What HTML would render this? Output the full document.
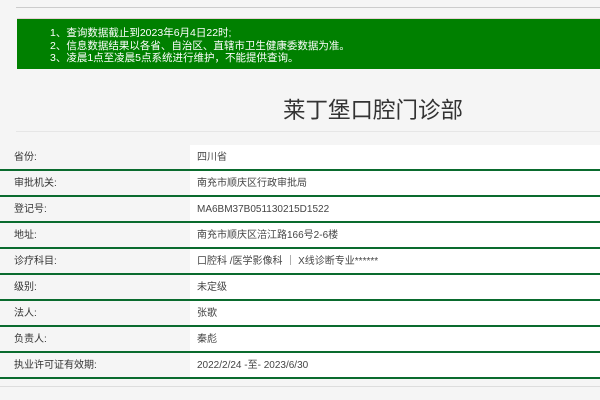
<!DOCTYPE html>
<html><head><meta charset="utf-8"><style>
*{margin:0;padding:0;box-sizing:border-box}
body{width:600px;height:400px;background:#f5f5f5;font-family:"Liberation Sans","Noto Sans CJK SC",sans-serif;position:relative;overflow:hidden;color:#333}
.l1{position:absolute;left:16px;top:7px;width:584px;height:1px;background:#ccc}
.notice{position:absolute;left:17px;top:18px;width:583px;height:51px;background:#008000;border-top:1px solid #e8d0d8;color:#fff;font-size:10.5px;line-height:12.5px;padding:8px 0 0 33px}
.title{position:absolute;left:283px;top:93px;font-size:22.5px;color:#333}
.l2{position:absolute;left:16px;top:131px;width:584px;height:1px;background:#e6e6e6}
.tbl{position:absolute;left:0;top:145px;width:600px}
.row{height:26px;border-bottom:2px solid #0a6b2e;display:flex;font-size:10px;color:#333}
.row .k{width:190px;background:#f5f5f5;padding-left:14px;line-height:25px}
.row .v{flex:1;background:#fff;padding-left:7px;line-height:25px;color:#444}
.l3{position:absolute;left:0;top:386px;width:600px;height:1px;background:#ddd}
</style></head><body>
<div class="l1"></div>
<div class="notice">1、查询数据截止到2023年6月4日22时;<br>2、信息数据结果以各省、自治区、直辖市卫生健康委数据为准。<br>3、凌晨1点至凌晨5点系统进行维护，不能提供查询。</div>
<div class="title">莱丁堡口腔门诊部</div>
<div class="l2"></div>
<div class="tbl">
<div class="row"><div class="k">省份:</div><div class="v">四川省</div></div>
<div class="row"><div class="k">审批机关:</div><div class="v">南充市顺庆区行政审批局</div></div>
<div class="row"><div class="k">登记号:</div><div class="v">MA6BM37B051130215D1522</div></div>
<div class="row"><div class="k">地址:</div><div class="v">南充市顺庆区涪江路166号2-6楼</div></div>
<div class="row"><div class="k">诊疗科目:</div><div class="v">口腔科 /医学影像科 ｜ X线诊断专业******</div></div>
<div class="row"><div class="k">级别:</div><div class="v">未定级</div></div>
<div class="row"><div class="k">法人:</div><div class="v">张歌</div></div>
<div class="row"><div class="k">负责人:</div><div class="v">秦彪</div></div>
<div class="row"><div class="k">执业许可证有效期:</div><div class="v">2022/2/24 -至- 2023/6/30</div></div>
</div>
<div class="l3"></div>
</body></html>
